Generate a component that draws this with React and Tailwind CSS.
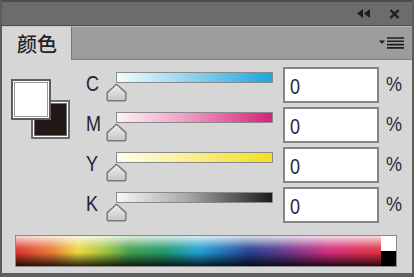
const ROWS = [
  { key: 'C', bar: 'bg-[linear-gradient(to_right,#f4fbfe,#9fd9f1_40%,#1ba6df)]' },
  { key: 'M', bar: 'bg-[linear-gradient(to_right,#fdf3f8,#f0a6c9_40%,#d8237c)]' },
  { key: 'Y', bar: 'bg-[linear-gradient(to_right,#fffdf0,#fbf1a0_40%,#f1df1e)]' },
  { key: 'K', bar: 'bg-[linear-gradient(to_right,#f7f7f7,#a9a9a9_45%,#1c1c1c)]' },
];

function Thumb() {
  return (
    <svg width="21" height="19" viewBox="0 0 21 19" className="-ml-[10px] block">
      <defs>
        <linearGradient id="thumbFill" x1="0" y1="0" x2="0" y2="1">
          <stop offset="0" stopColor="#f3f3f3" />
          <stop offset="1" stopColor="#c2c2c2" />
        </linearGradient>
      </defs>
      <path
        d="M10.5 1.2 L19.8 9.6 V16.6 Q19.8 17.8 18.6 17.8 H2.4 Q1.2 17.8 1.2 16.6 V9.6 Z"
        fill="url(#thumbFill)"
        stroke="#7a7a7a"
        strokeWidth="1.5"
        strokeLinejoin="round"
      />
    </svg>
  );
}

function SliderRow({ row }) {
  return (
    <div className="flex h-[40px] items-start">
      <div className="w-[34px] pl-[4px] pt-[8px] text-[18px] leading-[20px] text-[#1f2235]">
        <span className="inline-block scale-y-[1.2]">{row.key}</span>
      </div>
      <div className="flex w-[157px] flex-col pt-[6px]">
        <div className={`h-[11px] w-full border border-[#8a8a8a] ${row.bar}`} />
        <Thumb />
      </div>
      <div className="ml-[10px] mt-[1px] flex h-[36px] w-[96px] items-center border-2 border-[#858585] bg-white pl-[5px] pt-[4px] text-[18px] text-[#2a2a3a]">
        <span className="inline-block scale-y-[1.2]">0</span>
      </div>
      <div className="ml-[7px] pt-[8px] text-[18px] leading-[20px] text-[#25283a]">
        <span className="inline-block scale-y-[1.1]">%</span>
      </div>
    </div>
  );
}

function Swatches() {
  return (
    <div className="relative mt-[13px] h-[60px] w-[59px] shrink-0">
      <div className="absolute left-[20px] top-[21px] h-[39px] w-[39px] border-2 border-[#6c6c6c] bg-white p-[1px]">
        <div className="h-full w-full border border-[#6c6c6c] bg-[#231815]" />
      </div>
      <div className="absolute left-0 top-0 h-[41px] w-[40px] border-2 border-[#5e5e5e] bg-white p-[1px]">
        <div className="h-full w-full border border-[#9a9a9a] bg-white" />
      </div>
    </div>
  );
}

export default function App() {
  return (
    <div className="flex h-[277px] w-[414px] flex-col border-x-2 border-[#5c5c5c] bg-[#5f5f5f] font-['Liberation_Sans','Noto_Sans_CJK_SC',sans-serif]">
      {/* 标题栏 */}
      <div className="flex h-[26px] shrink-0 items-center justify-end gap-[18px] border-t-2 border-b border-t-[#4c4c4c] border-b-[#4f4f4f] bg-[#6c6c6c] pr-[12px]">
        <svg width="14" height="9" viewBox="0 0 14 9">
          <path d="M0 4.5 L6 0 V9 Z M7 4.5 L13 0 V9 Z" fill="#1e1e1e" />
        </svg>
        <svg width="11" height="10" viewBox="0 0 11 10">
          <path d="M1.5 1 L9.5 9 M9.5 1 L1.5 9" stroke="#1e1e1e" strokeWidth="2.4" />
        </svg>
      </div>

      {/* 标签栏 */}
      <div className="flex h-[34px] shrink-0 bg-[#9c9c9c]">
        <div className="flex w-[70px] items-center border-r border-t border-r-[#767676] border-t-[#c9c9c9] bg-[#d6d6d6] pl-[15px] pt-[3px] text-[20px] font-medium text-[#1e1f28]">
          颜色
        </div>
        <div className="flex flex-1 items-center justify-end border-t border-b border-t-[#b6b6b6] border-b-[#7e7e7e] pr-[8px]">
          <svg width="25" height="12" viewBox="0 0 25 12">
            <path d="M0 3.5 H6 L3 7 Z" fill="#1e1e1e" />
            <path d="M8 1 H25 M8 4.3 H25 M8 7.6 H25 M8 10.9 H25" stroke="#1e1e1e" strokeWidth="1.6" />
          </svg>
        </div>
      </div>

      {/* 主体 */}
      <div className="mb-[4px] flex flex-1 flex-col bg-[#d6d6d6] pl-[9px] pt-[6px]">
        <div className="flex">
          <Swatches />
          <div className="ml-[12px] flex flex-col">
            {ROWS.map((row) => (
              <SliderRow key={row.key} row={row} />
            ))}
          </div>
        </div>

        <div className="ml-[4px] mt-[9px] flex h-[32px] w-[382px] border border-[#8a8a8a]">
          <div className="h-full flex-1 bg-[linear-gradient(to_right,#d8332d,#ea7d36_10%,#ecd93e_17%,#a3c440_24%,#43a04a_31%,#219669_40%,#1ea0cf_50%,#1f70b5_57%,#263f8e_64%,#573a8c_72%,#9e3187_80%,#d32b7b_86%,#df323e_100%)]">
            <div className="h-full w-full bg-[linear-gradient(to_bottom,rgba(255,255,255,0.82),rgba(255,255,255,0.1)_40%,rgba(0,0,0,0)_55%,rgba(0,0,0,0.82))]" />
          </div>
          <div className="flex w-[15px] flex-col">
            <div className="flex-1 bg-white" />
            <div className="flex-1 bg-black" />
          </div>
        </div>
      </div>
    </div>
  );
}
